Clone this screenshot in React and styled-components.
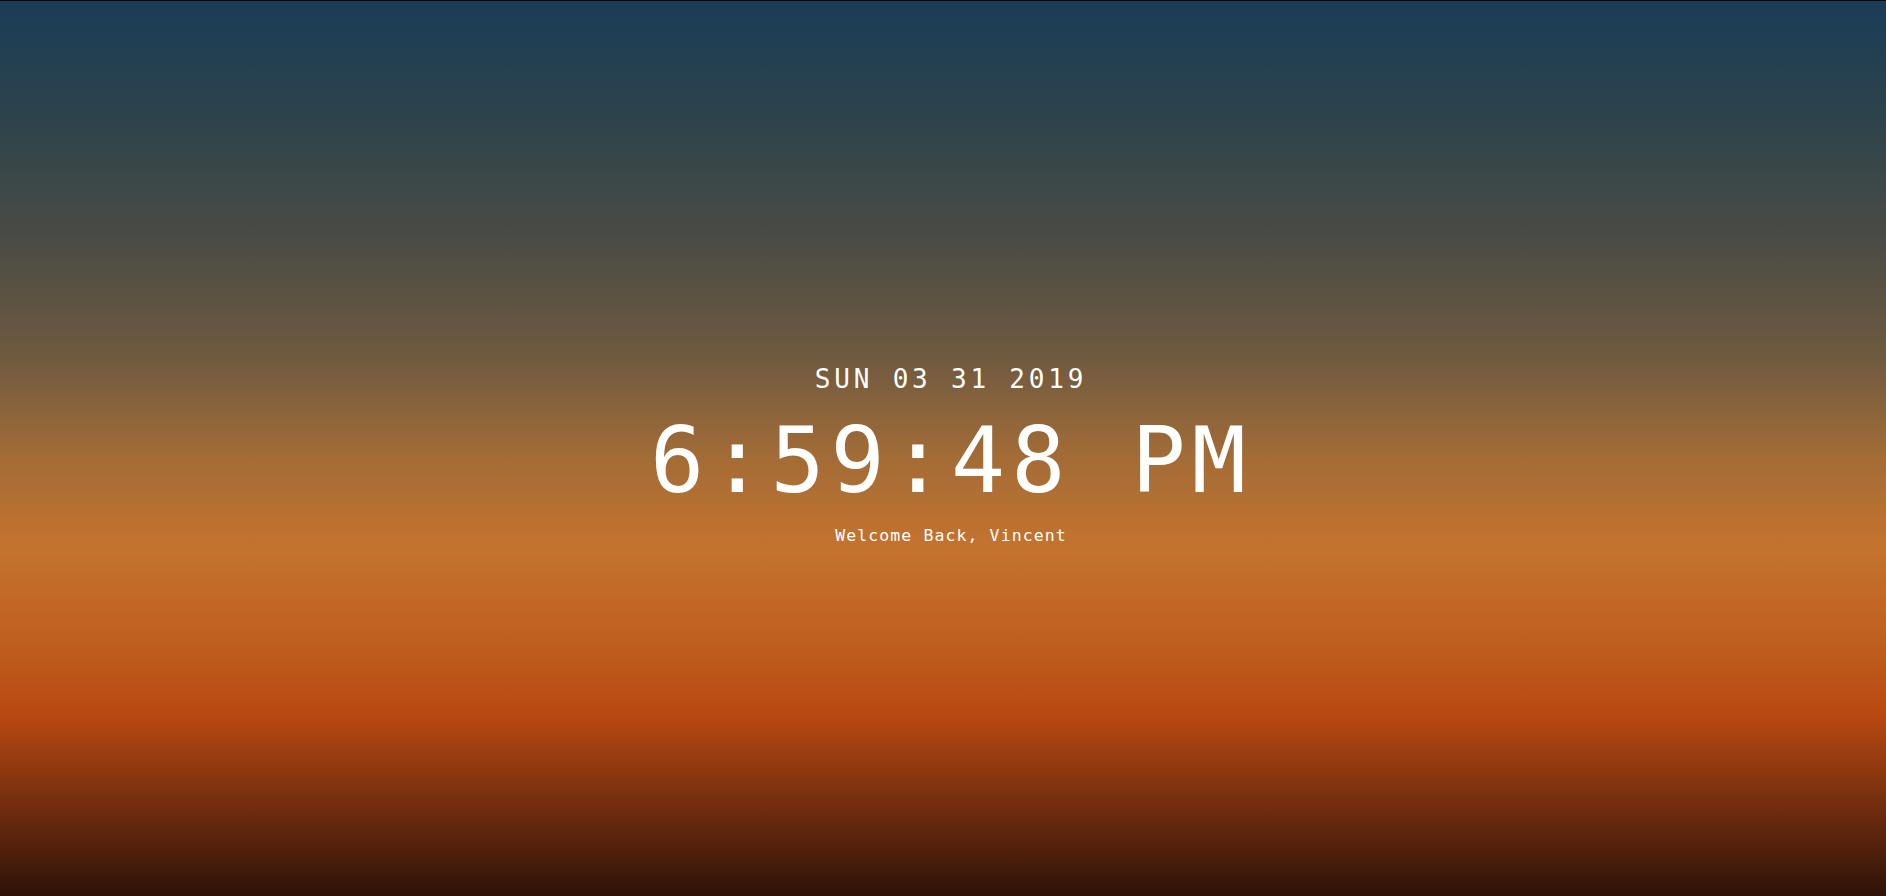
import React from 'react';
import styled, { createGlobalStyle } from 'styled-components';

const GlobalStyle = createGlobalStyle`
  html, body {
    margin: 0;
    padding: 0;
    height: 100%;
  }
  body {
    font-family: "DejaVu Sans Mono", "Liberation Mono", monospace;
    color: #fff;
    overflow: hidden;
  }
`;

// sunset sky
const Screen = styled.main`
  box-sizing: border-box;
  height: 100vh;
  border-top: 1px solid #0b0c0d;
  padding: 13px 0 0 16px;
  display: flex;
  flex-direction: column;
  align-items: center;
  justify-content: center;
  background: linear-gradient(
    to bottom,
    #1a3d56 0%,
    #2d434c 13%,
    #4b4c45 27%,
    #6f5a40 40%,
    #a36c36 51%,
    #c4732e 61%,
    #c0601f 71%,
    #b84811 80%,
    #6b2a0e 91%,
    #2e1208 100%
  );
`;

const DateLine = styled.div`
  font-size: 26px;
  line-height: 1;
  letter-spacing: 3.8px;
  margin-bottom: 24px;
`;

const Clock = styled.div`
  font-size: 90px;
  line-height: 1;
  letter-spacing: 6px;
  margin-bottom: 22px;
`;

const Greeting = styled.p`
  margin: 0;
  font-size: 16.5px;
  line-height: 1;
  letter-spacing: 1.1px;
`;

const App = () => {
  const date = 'SUN 03 31 2019';
  const time = '6:59:48 PM';
  const name = 'Vincent';

  return (
    <>
      <GlobalStyle />
      <Screen>
        <DateLine>{date}</DateLine>
        <Clock>{time}</Clock>
        <Greeting>Welcome Back, {name}</Greeting>
      </Screen>
    </>
  );
};

export default App;
